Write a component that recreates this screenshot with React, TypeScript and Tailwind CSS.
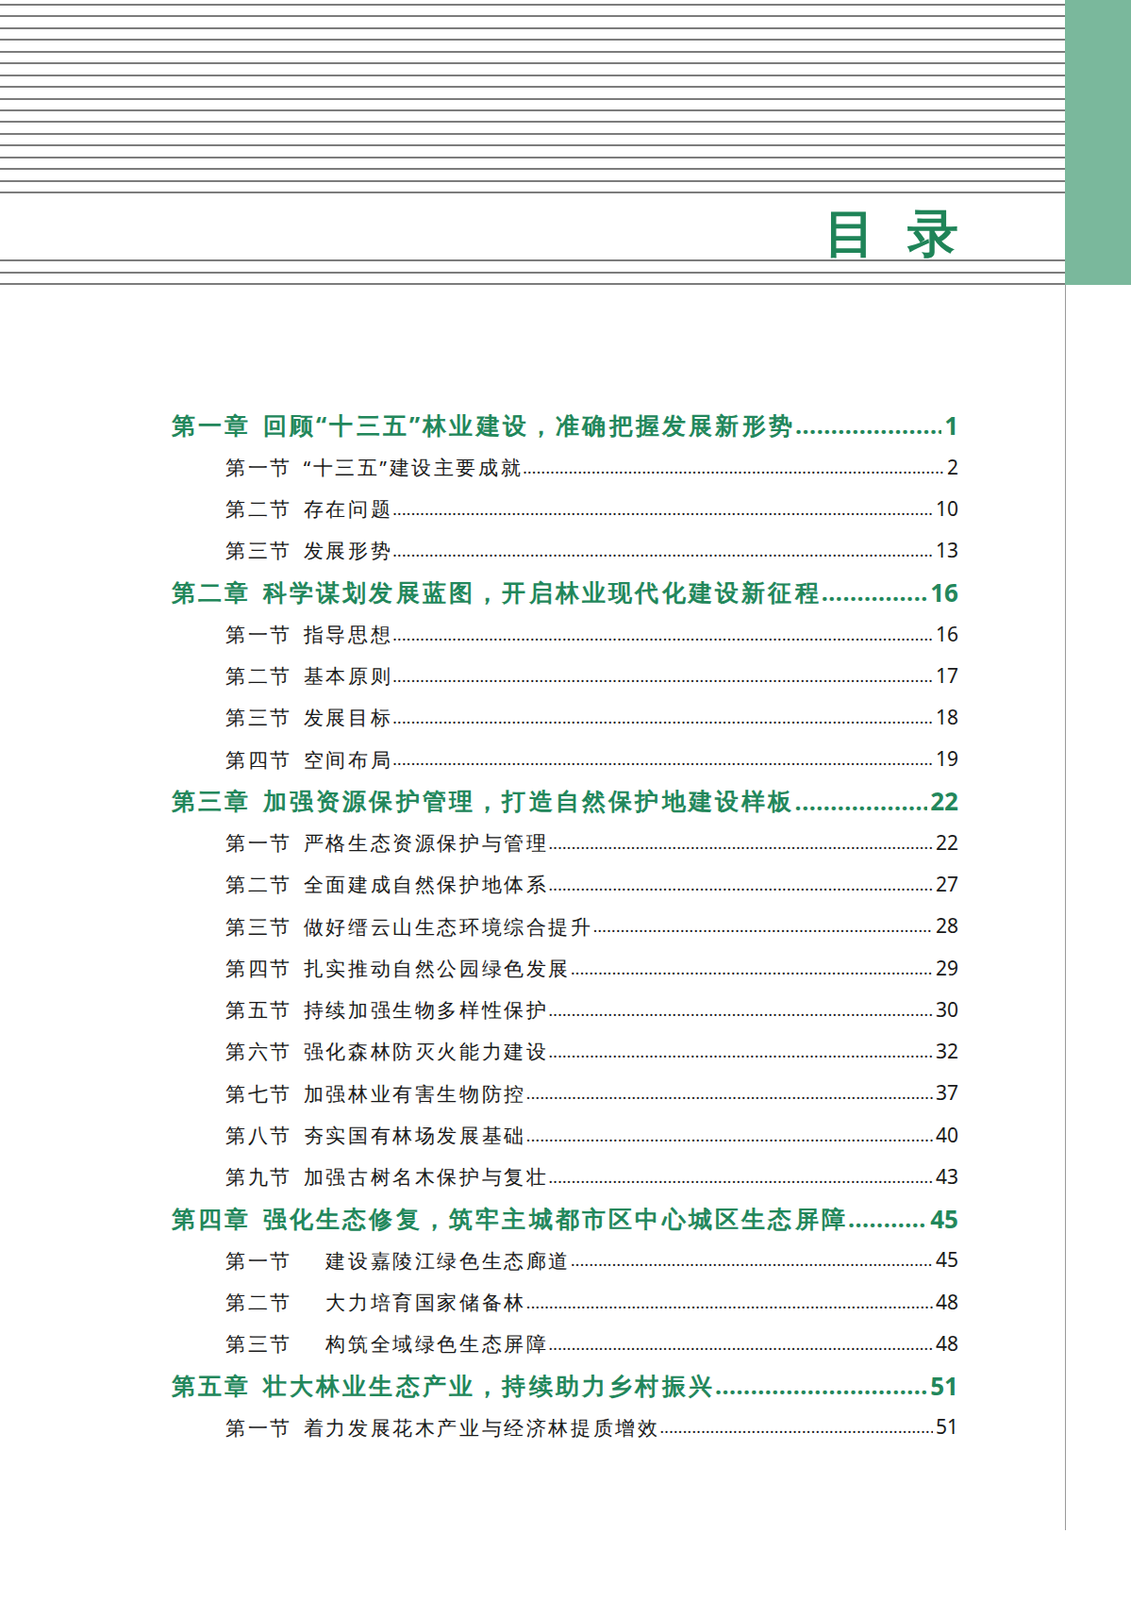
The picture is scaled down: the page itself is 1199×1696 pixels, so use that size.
const CJK = "font-['Noto_Sans_CJK_SC','Noto_Sans',sans-serif]"

type Row = { level: 'chapter' | 'section'; label: string; title: string; page: string }

const rows: Row[] = [
  { level: 'chapter', label: '第一章', title: '回顾“十三五”林业建设，准确把握发展新形势', page: '1' },
  { level: 'section', label: '第一节', title: '“十三五”建设主要成就', page: '2' },
  { level: 'section', label: '第二节', title: '存在问题', page: '10' },
  { level: 'section', label: '第三节', title: '发展形势', page: '13' },
  { level: 'chapter', label: '第二章', title: '科学谋划发展蓝图，开启林业现代化建设新征程', page: '16' },
  { level: 'section', label: '第一节', title: '指导思想', page: '16' },
  { level: 'section', label: '第二节', title: '基本原则', page: '17' },
  { level: 'section', label: '第三节', title: '发展目标', page: '18' },
  { level: 'section', label: '第四节', title: '空间布局', page: '19' },
  { level: 'chapter', label: '第三章', title: '加强资源保护管理，打造自然保护地建设样板', page: '22' },
  { level: 'section', label: '第一节', title: '严格生态资源保护与管理', page: '22' },
  { level: 'section', label: '第二节', title: '全面建成自然保护地体系', page: '27' },
  { level: 'section', label: '第三节', title: '做好缙云山生态环境综合提升', page: '28' },
  { level: 'section', label: '第四节', title: '扎实推动自然公园绿色发展', page: '29' },
  { level: 'section', label: '第五节', title: '持续加强生物多样性保护', page: '30' },
  { level: 'section', label: '第六节', title: '强化森林防灭火能力建设', page: '32' },
  { level: 'section', label: '第七节', title: '加强林业有害生物防控', page: '37' },
  { level: 'section', label: '第八节', title: '夯实国有林场发展基础', page: '40' },
  { level: 'section', label: '第九节', title: '加强古树名木保护与复壮', page: '43' },
  { level: 'chapter', label: '第四章', title: '强化生态修复，筑牢主城都市区中心城区生态屏障', page: '45' },
  { level: 'section', label: '第一节', title: '\u3000建设嘉陵江绿色生态廊道', page: '45' },
  { level: 'section', label: '第二节', title: '\u3000大力培育国家储备林', page: '48' },
  { level: 'section', label: '第三节', title: '\u3000构筑全域绿色生态屏障', page: '48' },
  { level: 'chapter', label: '第五章', title: '壮大林业生态产业，持续助力乡村振兴', page: '51' },
  { level: 'section', label: '第一节', title: '着力发展花木产业与经济林提质增效', page: '51' },
]

const DOTS = '.'.repeat(400)

function TocRow({ row }: { row: Row }) {
  const chapter = row.level === 'chapter'
  return (
    <div
      className={
        chapter
          ? 'flex h-[44.25px] items-center pl-[182px] text-[25px] font-bold text-[#22875b]'
          : 'flex h-[44.25px] items-center pl-[239px] text-[20.5px] text-[#1a1a1a]'
      }
    >
      <span
        className={`${CJK} shrink-0 whitespace-nowrap ${chapter ? 'tracking-[3.2px]' : 'tracking-[2.6px]'}`}
      >
        {row.label}
        <span className={chapter ? 'inline-block w-[12px]' : 'inline-block w-[12px]'} />
        {row.title}
      </span>
      <span
        className={`min-w-0 flex-1 overflow-hidden whitespace-nowrap font-['Liberation_Serif',serif] leading-none ${
          chapter ? 'tracking-[0.5px]' : 'text-[17px] tracking-[0.3px]'
        }`}
      >
        {DOTS}
      </span>
      <span className={`shrink-0 pl-[3px] font-['Liberation_Serif',serif] leading-none ${chapter ? 'text-[26px]' : 'text-[21px]'}`}>
        {row.page}
      </span>
    </div>
  )
}

export default function App() {
  return (
    <div className="flex h-[1696px] w-[1199px] bg-white">
      <div className="w-[1129px]">
        <div className="pt-[4px]">
          {Array.from({ length: 17 }).map((_, i) => (
            <div key={i} className="h-[12.45px] border-t-2 border-[#7c7c7c]" />
          ))}
        </div>
        <div className="flex h-[60px] items-center justify-end pr-[113px]">
          <h1 className={`${CJK} mr-[-34px] text-[54px] font-bold leading-none tracking-[34px] text-[#1f8458]`}>
            目录
          </h1>
        </div>
        <div>
          {Array.from({ length: 3 }).map((_, i) => (
            <div key={i} className="h-[12.45px] border-t-2 border-[#7c7c7c]" />
          ))}
        </div>
        <div className="pt-[116px] pr-[113px]">
          {rows.map((r, i) => (
            <TocRow key={i} row={r} />
          ))}
        </div>
      </div>
      <div className="flex w-[70px] flex-col">
        <div className="h-[302px] bg-[#7ab89c]" />
        <div className="h-[1320px] w-[1px] bg-[#9a9a9a]" />
      </div>
    </div>
  )
}
